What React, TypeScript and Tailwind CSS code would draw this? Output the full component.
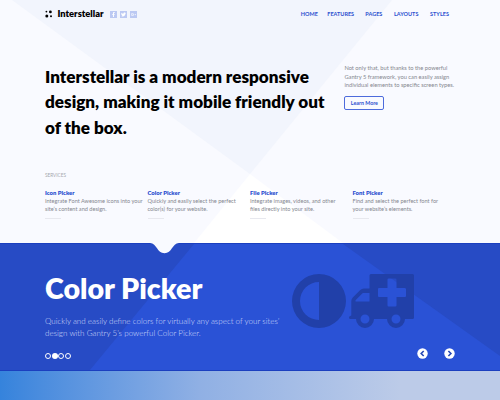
import React from "react";
import { FaFacebookF, FaTwitter, FaGooglePlusG } from "react-icons/fa";

const nav = [
  { label: "HOME", cls: "w-[26.5px]" },
  { label: "FEATURES", cls: "w-[38px]" },
  { label: "PAGES", cls: "w-[28.7px]" },
  { label: "LAYOUTS", cls: "w-[36px]" },
  { label: "STYLES", cls: "w-[24px]" },
];

const services = [
  { title: "Icon Picker", lines: ["Integrate Font Awesome icons into your", "site’s content and design."] },
  { title: "Color Picker", lines: ["Quickly and easily select the perfect", "color(s) for your website."] },
  { title: "File Picker", lines: ["Integrate images, videos, and other", "files directly into your site."] },
  { title: "Font Picker", lines: ["Find and select the perfect font for", "your website’s elements."] },
];

function Logo() {
  return (
    <svg className="h-2 w-2" viewBox="0 0 8 8" fill="#000">
      <circle cx="1.4" cy="1.6" r="0.9" />
      <circle cx="5.4" cy="1.9" r="1.4" />
      <circle cx="1.8" cy="5.9" r="1.5" />
      <circle cx="6" cy="6.2" r="1" />
    </svg>
  );
}

function Contrast() {
  return (
    <svg className="h-[54px] w-[54px] shrink-0" viewBox="0 0 54 54" fill="#2140a9">
      <path fillRule="evenodd" d="M27 0a27 27 0 1 0 0 54a27 27 0 1 0 0-54zM27 8v38a19 19 0 0 1 0-38z" />
    </svg>
  );
}

function Ambulance() {
  return (
    <svg className="ml-[3px] h-[54px] w-[65px] shrink-0" viewBox="0 0 65 54" fill="#2140a9">
      <path
        fillRule="evenodd"
        d="M22 0h41.5q1.5 0 1.5 1.5v42q0 1.5-1.5 1.5H56a9 9 0 1 1-18 0H25a9 9 0 1 1-18 0H1.5Q0 45 0 43.4Q0 42 2.3 41.6V27q0-2 1.5-3.5l7.2-7.3q1.8-1.7 4-1.7h5.5V1.5Q20.5 0 22 0zM14.2 19h6.3v8.5H6.5V26.2l7-7zM38.5 5.5q0-1 1-1h7q1 0 1 1v8.5h8.5q1 0 1 1v7q0 1-1 1h-8.5v8.5q0 1-1 1h-7q-1 0-1-1V23H30q-1 0-1-1v-7q0-1 1-1h8.5zM16 40.5a4.5 4.5 0 1 0 0 9a4.5 4.5 0 1 0 0-9zM47 40.5a4.5 4.5 0 1 0 0 9a4.5 4.5 0 1 0 0-9z"
      />
    </svg>
  );
}

function Arrow({ d }: { d: string }) {
  return (
    <svg className="h-[11px] w-[11px]" viewBox="0 0 11 11">
      <circle cx="5.5" cy="5.5" r="5.2" fill="#fff" />
      <path d={d} fill="none" stroke="#2447b5" strokeWidth="1.6" />
    </svg>
  );
}

export default function App() {
  return (
    <div className="relative h-[400px] w-[500px] overflow-hidden bg-[#f9faff] font-['Lato',sans-serif]">
      <svg className="absolute inset-0" width="500" height="243" viewBox="0 0 500 243">
        <path d="M12 0H392L250 174z" fill="#f2f5fd" />
        <path d="M250 174L343 243H194z" fill="#fff" />
      </svg>

      <div className="relative flex h-full flex-col">
        <header className="flex h-[28px] items-center pl-[45px] pr-[46px] text-[#2b50cf]">
          <Logo />
          <span className="ml-[4.5px] w-[52px] whitespace-nowrap text-[9.3px] font-extrabold leading-none text-black">Interstellar</span>
          <div className="flex gap-[3px] text-[5px] text-white">
            <span className="flex size-[7px] items-center justify-center bg-[#bcc9f3]"><FaFacebookF /></span>
            <span className="flex size-[7px] items-center justify-center bg-[#bcc9f3]"><FaTwitter /></span>
            <span className="flex size-[7px] items-center justify-center bg-[#bcc9f3]"><FaGooglePlusG /></span>
          </div>
          <nav className="ml-auto flex whitespace-nowrap pt-px text-[5.5px] font-bold leading-none">
            {nav.map((n) => <span key={n.label} className={n.cls}>{n.label}</span>)}
          </nav>
        </header>

        <section className="flex h-[142px] pl-[45px] pt-[35px]">
          <h1 className="w-[299.4px] whitespace-nowrap pt-[0.5px] text-[17.1px] font-extrabold leading-[25.7px] text-black">
            Interstellar is a modern responsive<br />design, making it mobile friendly out<br />of the box.
          </h1>
          <div className="whitespace-nowrap pt-px text-[5.73px] leading-[8.6px] text-[#85878f]">
            <p>Not only that, but thanks to the powerful<br />Gantry 5 framework, you can easily assign<br />individual elements to specific screen types.</p>
            <button className="mt-[6.5px] flex h-[14px] w-[40px] items-center justify-center rounded-[2px] border border-[#4d6bdc] text-[5.3px] font-bold text-[#2b50cf]">Learn More</button>
          </div>
        </section>

        <section className="h-[73px] pl-[45px] pt-[3px]">
          <h2 className="text-[4.7px] leading-[5px] text-[#a5a7ae]">SERVICES</h2>
          <div className="mt-[9.5px] flex whitespace-nowrap">
            {services.map((s) => (
              <article key={s.title} className="w-[102.5px]">
                <h3 className="text-[5.9px] font-extrabold leading-[9px] text-[#2b50cf]">{s.title}</h3>
                <p className="text-[5.6px] leading-[8.6px] text-[#85878f]">{s.lines[0]}<br />{s.lines[1]}</p>
                <div className="mt-[4px] h-px w-4 bg-[#e7e8ee]" />
              </article>
            ))}
          </div>
        </section>

        <section className="relative h-[128px] border-y border-[#1b3fbf] bg-[#274bc5]">
          <svg className="absolute left-0 -top-px" width="500" height="128" viewBox="0 243 500 128">
            <path d="M194 244H343L500 356V370H90z" fill="#2a52d6" />
            <path d="M150 243C157 243.5 157 253.3 164.5 253.3S172 243.5 179 243z" fill="#f9faff" />
          </svg>
          <div className="relative flex h-full justify-between pl-[45px] pr-[45px]">
            <div className="whitespace-nowrap pt-[26px]">
              <h2 className="text-[28.6px] font-extrabold leading-[36px] text-white">Color Picker</h2>
              <p className="mt-[10px] text-[8.05px] font-light leading-[11.7px] text-[#d3ddfb]">
                Quickly and easily define colors for virtually any aspect of your sites’<br />design with Gantry 5’s powerful Color Picker.
              </p>
              <div className="mt-[14px] flex gap-[0.5px]">
                {[0, 1, 2, 3].map((i) => (
                  <span key={i} className={i === 1 ? "size-[6px] rounded-full bg-white" : "size-[6px] rounded-full border border-white"} />
                ))}
              </div>
            </div>
            <div className="flex w-[163px] shrink-0 flex-col pt-[30px]">
              <div className="flex">
                <Contrast />
                <Ambulance />
              </div>
              <div className="mt-[19.5px] flex justify-end gap-[16px]">
                <Arrow d="M6.7 3L4.2 5.5L6.7 8" />
                <Arrow d="M4.4 3L6.9 5.5L4.4 8" />
              </div>
            </div>
          </div>
        </section>
        <div className="flex-1 bg-linear-to-r from-[#3583dc] via-[#90b0e4] via-40% to-[#bccbe8] to-80%" />
      </div>
    </div>
  );
}
